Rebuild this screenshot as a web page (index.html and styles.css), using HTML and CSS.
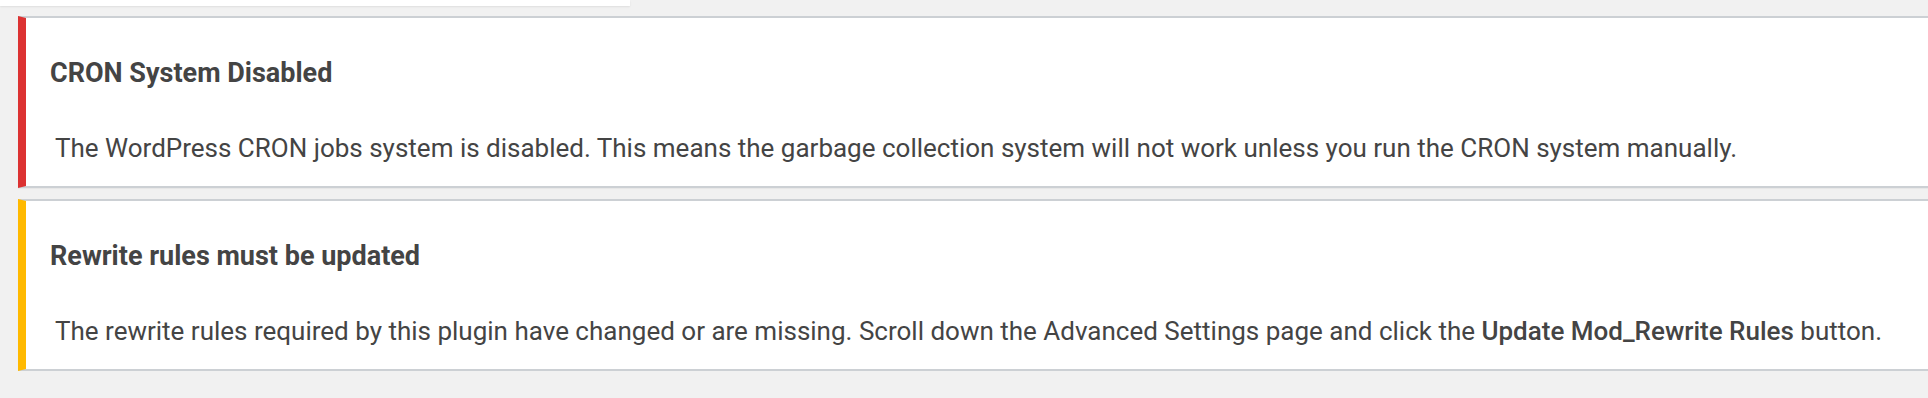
FILE: index.html
```html
<!DOCTYPE html>
<html>
<head>
<meta charset="utf-8">
<link rel="stylesheet" href="styles.css">
</head>
<body>
<div class="postbox"></div>
<div class="notices">
  <div class="notice notice-error">
    <p class="notice-title">CRON System Disabled</p>
    <p class="notice-text">The WordPress CRON jobs system is disabled. This means the garbage collection system will not work unless you run the CRON system manually.</p>
  </div>
  <div class="notice notice-warning">
    <p class="notice-title">Rewrite rules must be updated</p>
    <p class="notice-text">The rewrite rules required by this plugin have changed or are missing. Scroll down the Advanced Settings page and click the <strong>Update Mod_Rewrite Rules</strong> button.</p>
  </div>
</div>
</body>
</html>
```
FILE: styles.css
```css
html, body {
  margin: 0;
  padding: 0;
  background: #f1f1f1;
  font-family: Roboto, "Noto Sans", sans-serif;
  color: #444;
}
.postbox {
  width: 630px;
  height: 6px;
  background: #fff;
  box-shadow: 0 1px 2px rgba(0,0,0,0.08);
}
.notices {
  padding: 10px 0 0 18px;
  display: flex;
  flex-direction: column;
  gap: 11px;
  overflow: hidden;
}
.notice {
  background: #fff;
  border-top: 2px solid #ccd0d4;
  border-bottom: 2px solid #ccd0d4;
  border-left: 8px solid #dc3232;
  margin-right: -20px;
  padding: 0 0 18px 24px;
  box-shadow: 0 1px 1px rgba(0,0,0,0.04);
}
.notice-warning {
  border-left-color: #ffb900;
}
.notice p {
  margin: 0;
  white-space: nowrap;
}
.notice-title {
  font-size: 27px;
  line-height: 36px;
  font-weight: 700;
  padding-top: 37px;
}
.notice-text {
  font-size: 26px;
  line-height: 40px;
  padding-top: 37px;
  padding-left: 5px;
}
.notice-text strong {
  font-weight: 500;
}
```
